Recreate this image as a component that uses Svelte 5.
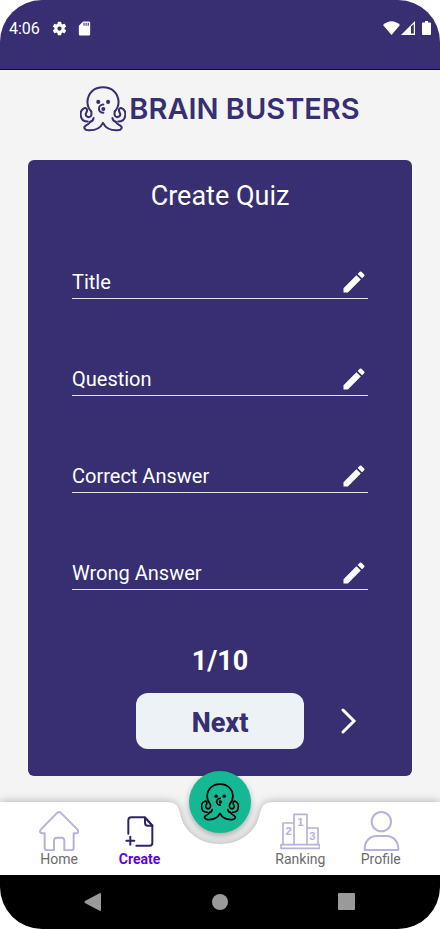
<script lang="ts">
  interface Field {
    id: string;
    label: string;
  }

  const fields: Field[] = [
    { id: 'title', label: 'Title' },
    { id: 'question', label: 'Question' },
    { id: 'correct', label: 'Correct Answer' },
    { id: 'wrong', label: 'Wrong Answer' },
  ];

  const total = 10;

  let current = $state(1);
  let values: Record<string, string> = $state({ title: '', question: '', correct: '', wrong: '' });

  function next() {
    if (current < total) current += 1;
  }
</script>

{#snippet octopus()}
  <svg class="octopus" viewBox="0 0 136 134" aria-hidden="true">
    <g fill="none" stroke="currentColor" stroke-width="6" stroke-linecap="round" stroke-linejoin="round">
      <path d="M33 74C25 65 22 55 22 46C23 19 42 3 68 3s45 16 46 43c0 9-3 19-11 28" />
      <path d="M33 74c4 15-5 19-11 16c-9-4-4-10-2-15c2-6 0-12-6-11C4 68 0 78 3 90c2 10 9 14 20 14" />
      <path d="M103 74c-4 15 5 19 11 16c9-4 4-10 2-15c-2-6 0-12 6-11c10 4 14 14 11 26c-2 10-9 14-20 14" />
      <path d="M40 94q-1 9-10 11M96 94q1 9 10 11" />
      <path d="M30 105C27 111 22 113 17 116C9 121 13 129 25 130C44 131 60 124 68 108C76 124 92 131 111 130C123 129 127 121 119 116C114 113 109 111 106 105" />
      <path d="M69 54c-8 0-13 6-13 12s5 12 13 12" />
    </g>
    <circle cx="69" cy="67" r="6" fill="currentColor" />
    <circle cx="54" cy="46" r="6" fill="currentColor" />
    <circle cx="83" cy="46" r="6" fill="currentColor" />
  </svg>
{/snippet}

<div class="phone">
  <div class="status-bar">
    <div class="status-left">
      <span>4:06</span>
      <svg width="17" height="17" viewBox="0 0 24 24" fill="currentColor" aria-hidden="true">
        <path d="M19.14 12.94c.04-.3.06-.61.06-.94s-.02-.64-.07-.94l2.03-1.58a.49.49 0 0 0 .12-.61l-1.92-3.32a.49.49 0 0 0-.59-.22l-2.39.96a7 7 0 0 0-1.62-.94l-.36-2.54a.48.48 0 0 0-.48-.41h-3.84a.48.48 0 0 0-.47.41l-.36 2.54c-.59.24-1.13.57-1.62.94l-2.39-.96a.49.49 0 0 0-.59.22L2.74 8.87a.48.48 0 0 0 .12.61l2.03 1.58c-.05.3-.09.63-.09.94s.02.64.07.94l-2.03 1.58a.49.49 0 0 0-.12.61l1.92 3.32c.12.22.37.29.59.22l2.39-.96c.5.38 1.03.7 1.62.94l.36 2.54c.05.24.24.41.48.41h3.84c.24 0 .44-.17.47-.41l.36-2.54a7 7 0 0 0 1.62-.94l2.39.96c.22.08.47 0 .59-.22l1.92-3.32a.48.48 0 0 0-.12-.61zM12 15a3 3 0 1 1 0-6 3 3 0 0 1 0 6z" />
      </svg>
      <svg width="17" height="17" viewBox="0 0 24 24" fill="currentColor" aria-hidden="true">
        <path d="M18 2h-8L4 8v12c0 1.100.9 2 2 2h12c1.100 0 2-.9 2-2V4c0-1.100-.9-2-2-2zm-6 6h-1.500V4H12zm3 0h-1.500V4H15zm3 0h-1.500V4H18z" />
      </svg>
    </div>
    <div class="status-right">
      <svg width="17" height="14" viewBox="0 0 17 14" fill="currentColor" aria-hidden="true">
        <path d="M0 4Q8.500-3.500 17 4L8.500 14z" />
      </svg>
      <svg width="14" height="14" viewBox="0 0 14 14" aria-hidden="true">
        <path fill="currentColor" d="M14 0v14H0z" />
        <path fill="#372f72" d="M10 5.500L12.800 3v9.500H10z" />
      </svg>
      <svg class="battery" width="9" height="14" viewBox="0 0 9 14" fill="currentColor" aria-hidden="true">
        <path d="M3 0h3v1.500h2q1 0 1 1V13q0 1-1 1H1q-1 0-1-1V2.500q0-1 1-1h2z" />
      </svg>
    </div>
  </div>

  <header class="brand">
    {@render octopus()}
    <span class="brand-name">BRAIN BUSTERS</span>
  </header>

  <main class="content">
    <form class="card" onsubmit={(e) => { e.preventDefault(); next(); }}>
      <h1 class="card-title">Create Quiz</h1>

      <div class="fields">
        {#each fields as field}
          <div class="field">
            <input
              id={field.id}
              type="text"
              placeholder={field.label}
              aria-label={field.label}
              bind:value={values[field.id]}
            />
            <label class="edit" for={field.id} aria-label="Edit {field.label}">
              <svg width="28" height="28" viewBox="0 0 24 24" fill="currentColor" aria-hidden="true">
                <path d="M3 17.250V21h3.750L17.810 9.940l-3.750-3.750zM20.710 7.040a1 1 0 0 0 0-1.410l-2.340-2.340a1 1 0 0 0-1.410 0l-1.830 1.830 3.750 3.750z" />
              </svg>
            </label>
          </div>
        {/each}
      </div>

      <p class="counter">{current}/{total}</p>

      <div class="actions">
        <button type="submit" class="next-btn">Next</button>
        <button type="button" class="skip-btn" aria-label="Next question" onclick={next}>
          <svg width="16" height="26" viewBox="0 0 16 26" aria-hidden="true">
            <path d="M2 2l11 11L2 24" fill="none" stroke="currentColor" stroke-width="3" stroke-linecap="round" />
          </svg>
        </button>
      </div>
    </form>
  </main>

  <nav class="tabs" aria-label="Main">
    <div class="tabs-shape">
      <div class="tabs-side"></div>
      <svg width="110" height="73" viewBox="0 0 110 73" aria-hidden="true">
        <path fill="#fff" d="M0 0H3Q13 0 15 11C18 29 34 42 55 42S92 29 95 11Q97 0 107 0H110V73H0z" />
      </svg>
      <div class="tabs-side"></div>
    </div>

    <a href="#home" class="tab">
      <svg viewBox="0 0 120 120" aria-hidden="true">
        <path d="M55 5q5-4 10 0l50 50q4 5 2 9q-2 3-7 3h-6v43q0 8-8 8H76V89q0-9-9-9H54q-9 0-9 9v29H26q-9 0-9-8V67h-6q-5 0-7-3q-2-4 2-9z" />
      </svg>
      <span>Home</span>
    </a>
    <a href="#create" class="tab active" aria-current="page">
      <svg viewBox="0 0 120 120" aria-hidden="true">
        <path d="M25 68V28q0-9 9-9h41l22 24v53q0 8-8 8H49" />
        <path d="M75 20v16q0 8 8 8h14zM31 77v24M19 89h24" />
      </svg>
      <span>Create</span>
    </a>
    <a href="#play" class="fab" aria-label="Play">
      {@render octopus()}
    </a>
    <a href="#ranking" class="tab">
      <svg class="podium" viewBox="0 0 120 120" aria-hidden="true">
        <path d="M3 101h116v11H3zM42 101V10h39v91M42 36H9v65M81 51h33v50" />
        <text x="61" y="46">1</text>
        <text x="26" y="71">2</text>
        <text x="97" y="87">3</text>
      </svg>
      <span>Ranking</span>
    </a>
    <a href="#profile" class="tab">
      <svg viewBox="0 0 120 120" aria-hidden="true">
        <circle cx="61" cy="32" r="29" />
        <path d="M11 117v-5C12 89 28 75 46 75h31c18 0 34 14 35 37v5z" />
      </svg>
      <span>Profile</span>
    </a>
  </nav>

  <div class="system-bar">
    <button type="button" aria-label="Back">
      <svg width="18" height="18" viewBox="0 0 18 18" fill="currentColor" aria-hidden="true">
        <path d="M1 8L16 0q1 0 1 1v16q0 1-1 1L1 10q-1-1 0-2z" />
      </svg>
    </button>
    <button type="button" aria-label="Home screen">
      <svg width="18" height="18" viewBox="0 0 18 18" fill="currentColor" aria-hidden="true">
        <circle cx="9" cy="9" r="8" />
      </svg>
    </button>
    <button type="button" aria-label="Recent apps">
      <svg width="18" height="18" viewBox="0 0 18 18" fill="currentColor" aria-hidden="true">
        <rect width="17" height="17" rx="1" />
      </svg>
    </button>
  </div>
</div>

<style>
  :global(body) {
    margin: 0;
    background: #fff;
  }

  .phone {
    display: flex;
    flex-direction: column;
    min-height: 100vh;
    overflow: hidden;
    border-radius: 42px;
    background: #f4f4f4;
    font-family: Roboto, 'Liberation Sans', sans-serif;
  }

  svg {
    display: block;
    flex-shrink: 0;
  }

  button {
    padding: 0;
    border: none;
    background: none;
    font-family: inherit;
    cursor: pointer;
  }

  /* Status bar */

  .status-bar {
    display: flex;
    justify-content: space-between;
    box-sizing: border-box;
    height: 70px;
    padding: 18px 9px 0;
    border-bottom: 1px solid #0c0650;
    background: #372f72;
    color: #fff;
    font-size: 16px;
    line-height: 20px;
  }

  .status-left,
  .status-right {
    display: flex;
    align-items: center;
    height: 20px;
  }

  .status-left {
    gap: 8px;
  }

  .status-left span {
    margin-right: 3px;
    padding-top: 1px;
  }

  .status-right {
    gap: 1px;
  }

  .battery {
    margin-left: 6px;
  }

  /* Brand */

  .brand {
    display: flex;
    align-items: center;
    justify-content: center;
    gap: 3px;
    height: 78px;
    padding-bottom: 12px;
    color: #372f72;
  }

  .brand .octopus {
    width: 46px;
    height: 46px;
  }

  .brand-name {
    font-family: Inter, Roboto, sans-serif;
    font-size: 29px;
    font-weight: 600;
    line-height: 32px;
  }

  /* Card */

  .content {
    flex: 1;
    padding: 0 28px 26px;
  }

  .card {
    padding: 20px 44px 27px;
    border-radius: 6px;
    background: #372f72;
    color: #fff;
  }

  .card-title {
    margin: 0 0 47px;
    font-size: 27px;
    font-weight: 400;
    line-height: 32px;
    text-align: center;
  }

  .fields {
    display: flex;
    flex-direction: column;
    gap: 57px;
  }

  .field {
    display: flex;
    align-items: center;
    box-sizing: border-box;
    height: 40px;
    padding-top: 7px;
    border-bottom: 1px solid #e4e2ee;
  }

  .field input {
    flex: 1;
    min-width: 0;
    padding: 0;
    border: none;
    outline: none;
    background: none;
    color: #fff;
    font-family: inherit;
    font-size: 20px;
    line-height: 28px;
  }

  .field input::placeholder {
    color: #fff;
    opacity: 1;
  }

  .edit {
    cursor: pointer;
  }

  .counter {
    margin: 55px 0 16px;
    font-size: 27px;
    font-weight: 700;
    line-height: 32px;
    text-align: center;
  }

  .actions {
    display: grid;
    grid-template-columns: 1fr 168px 1fr;
    align-items: center;
  }

  .next-btn {
    grid-column: 2;
    height: 56px;
    padding-top: 3px;
    border-radius: 12px;
    background: #edf2f6;
    color: #372f72;
    font-size: 27px;
    font-weight: 800;
  }

  .skip-btn {
    display: flex;
    align-items: center;
    justify-content: center;
    justify-self: end;
    width: 38px;
    height: 40px;
    color: #fff;
  }

  /* Tab bar */

  .tabs {
    position: relative;
    display: grid;
    grid-template-columns: repeat(5, 1fr);
    height: 73px;
    padding: 0 19px;
  }

  .tabs-shape {
    position: absolute;
    inset: 0;
    display: flex;
    filter: drop-shadow(0 0 5px rgba(0, 0, 0, 0.3));
  }

  .tabs-side {
    flex: 1;
    background: #fff;
  }

  .tab {
    position: relative;
    display: flex;
    flex-direction: column;
    align-items: center;
    padding-top: 9px;
    color: #6b6b6b;
    font-size: 14px;
    line-height: 16px;
    text-decoration: none;
  }

  .tab svg {
    width: 40px;
    height: 40px;
    fill: none;
    stroke: #b7b2dc;
    stroke-width: 6;
    stroke-linejoin: round;
  }

  .tab.active {
    color: #5a00ee;
    font-weight: 700;
  }

  .tab.active svg {
    stroke: #2c2469;
    stroke-linecap: round;
  }

  .tab .podium {
    stroke-width: 5;
  }

  .podium text {
    fill: #b7b2dc;
    stroke: none;
    font-family: 'Liberation Sans', sans-serif;
    font-size: 34px;
    font-weight: 700;
    text-anchor: middle;
  }

  .fab {
    position: relative;
    display: flex;
    align-items: center;
    justify-content: center;
    justify-self: center;
    width: 62px;
    height: 62px;
    margin-top: -31px;
    border-radius: 50%;
    background: #14b892;
    color: #000;
    box-shadow: 0 3px 6px rgba(0, 0, 0, 0.3);
  }

  .fab .octopus {
    width: 38px;
    height: 38px;
  }

  /* Android navigation */

  .system-bar {
    position: relative;
    display: grid;
    grid-template-columns: repeat(3, 1fr);
    align-items: center;
    height: 54px;
    padding: 0 29px;
    background: #000;
    color: #9a9a9a;
  }

  .system-bar button {
    display: flex;
    justify-content: center;
    color: inherit;
  }
</style>
